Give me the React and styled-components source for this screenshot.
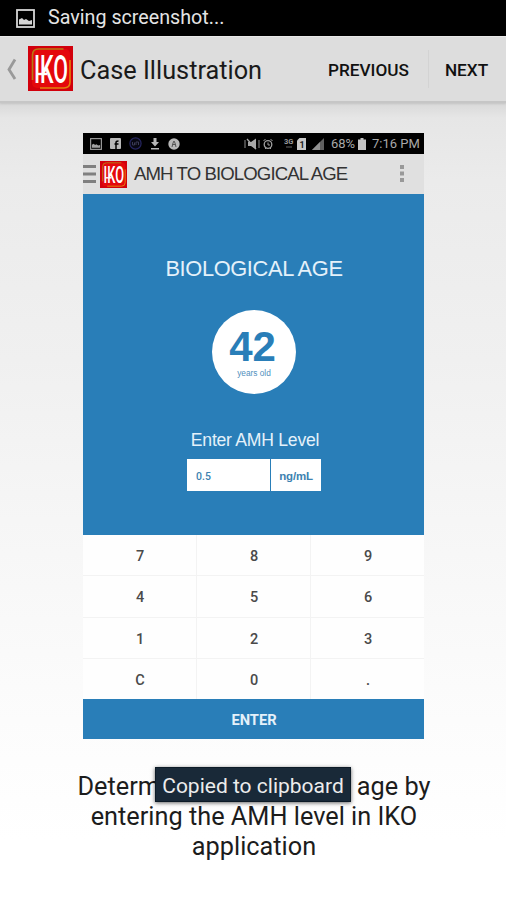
import React from "react";
import styled, { createGlobalStyle } from "styled-components";

const GlobalStyle = createGlobalStyle`
	* {
		box-sizing: border-box;
	}

	body {
		margin: 0;
		font-family: Roboto, "Liberation Sans", sans-serif;
	}
`;

const Screen = styled.div`
	width: 506px;
	height: 900px;
	overflow: hidden;
	position: relative;

	display: grid;
	grid-template-rows: 36px 67px 1fr;

	background: linear-gradient(#d8d8d8 102px, #e6e6e6 118px, #ebebeb 180px, #f0f0f0 360px, #f6f6f6 520px, #fcfcfc 720px, #ffffff 840px);
`;

const StatusBar = styled.div`
	background: #000;
	color: #e4e4e4;
	padding-left: 16px;

	display: flex;
	align-items: center;
	gap: 13px;

	span {
		font-size: 19.7px;
		line-height: 34px;
	}
`;

const ActionBar = styled.header`
	background: #dddddd;
	border-top: 1px solid #e9e9e9;
	border-bottom: 2px solid #c6c6c6;
	box-shadow: 0 1px 2px rgba(0, 0, 0, 0.1);

	display: grid;
	grid-template-columns: 28px 52px 1fr 117px 78px;
	align-items: center;

	> svg {
		margin-bottom: 1px;
	}
`;

const BarTitle = styled.h1`
	margin: 0;
	padding-top: 3px;
	font-size: 25.3px;
	font-weight: 400;
	line-height: 30px;
	white-space: nowrap;
	color: #1a1a1a;
`;

const BarAction = styled.button`
	height: 38px;
	padding: 2px 2px 0 0;
	border: 0;
	border-left: ${({ $divider }) => ($divider ? "1px solid #d3d3d3" : "0")};
	background: none;
	font-family: inherit;
	font-size: 17.2px;
	font-weight: 500;
	color: #111;
`;

const Main = styled.main`
	padding-top: 30px;

	display: flex;
	flex-direction: column;
	align-items: center;
`;

const Phone = styled.section`
	width: 341px;
	height: 606px;
	margin-left: 1px;

	display: grid;
	grid-template-rows: 21px 40px 341px 164px 40px;
`;

const PhoneStatus = styled.div`
	background: #000;
	color: #a8a8a8;
	padding: 0 4px 0 7px;

	display: flex;
	align-items: center;
	justify-content: space-between;
`;

const PhoneIcons = styled.div`
	display: flex;
	align-items: center;
	gap: ${({ $gap }) => $gap}px;
`;

const PhoneText = styled.span`
	width: ${({ $width }) => $width}px;
	margin-left: ${({ $left }) => $left}px;
	font-size: 13px;
	line-height: 20px;
	white-space: nowrap;
`;

const PhoneBar = styled.div`
	background: #e0e0e0;

	display: grid;
	grid-template-columns: 17px 34px 1fr 46px;
	align-items: center;

	.title {
		font-family: "Liberation Sans", sans-serif;
		font-size: 18.6px;
		letter-spacing: -0.9px;
		white-space: nowrap;
		color: #333;
	}
`;

const AgePanel = styled.div`
	background: #297eb8;
	padding: 62px 0 0 1px;
	font-family: "Liberation Sans", sans-serif;
	color: #e4f1fa;

	display: flex;
	flex-direction: column;
	align-items: center;
`;

const PanelTitle = styled.div`
	font-size: 21.8px;
	line-height: 26px;
	letter-spacing: -0.35px;
	white-space: nowrap;
`;

const AgeCircle = styled.div`
	width: 84px;
	height: 84px;
	margin-top: 28px;
	border-radius: 50%;
	background: #fff;
	color: #297eb8;

	display: flex;
	flex-direction: column;
	align-items: center;

	.age {
		margin-top: 16px;
		margin-right: 3px;
		font-size: 42px;
		font-weight: bold;
		line-height: 42px;
	}

	.unit {
		margin-top: 1px;
		font-size: 8.3px;
		line-height: 9px;
		color: #4f8fbd;
	}
`;

const FieldLabel = styled.label`
	margin-top: 36px;
	margin-left: 2px;
	font-size: 17.6px;
	line-height: 20px;
	letter-spacing: -0.25px;
`;

const Field = styled.div`
	width: 134px;
	height: 32px;
	margin-top: 9px;
	background: #fff;
	color: #3d82b0;

	display: grid;
	grid-template-columns: 83px 1fr;
	align-items: center;

	.value {
		padding-left: 9px;
		font-family: Roboto, sans-serif;
		font-size: 10.5px;
		font-weight: 500;
	}

	.unit {
		height: 100%;
		border-left: 1px solid #297eb8;
		font-size: 11.5px;
		font-weight: bold;
		letter-spacing: -0.2px;
		line-height: 34px;
		text-align: center;
	}
`;

const Keypad = styled.div`
	background: #f3f3f3;

	display: grid;
	grid-template-columns: repeat(3, 1fr);
	grid-template-rows: repeat(4, 1fr);
	gap: 1px;
`;

const Key = styled.button`
	border: 0;
	padding: 3px 0 0 1px;
	background: #fefefe;
	font-family: inherit;
	font-size: 14.5px;
	font-weight: 500;
	color: #4a4a4a;
`;

const EnterButton = styled.button`
	border: 0;
	padding: 2px 0 0 1px;
	background: #297eb8;
	font-family: inherit;
	font-size: 14.7px;
	font-weight: 700;
	color: #e4f1fa;
`;

const Caption = styled.p`
	margin: 33px 0 0 2px;
	font-size: 25.3px;
	line-height: 30px;
	white-space: nowrap;
	text-align: center;
	color: #1c1c1c;
`;

const Toast = styled.div`
	position: absolute;
	left: 155px;
	top: 767px;
	width: 196px;
	height: 35px;
	border: 1px solid #0d1b27;
	background: #192938;
	box-shadow: 0 1px 4px rgba(0, 0, 0, 0.6);
	font-size: 21px;
	line-height: 36px;
	text-align: center;
	white-space: nowrap;
	color: #ececec;
`;

function IkoLogo({ size }) {
	return (
		<svg width={size} height={size} viewBox="0 0 45 45">
			<rect width="45" height="45" fill="#d2000c" />
			<rect x="4" y="3" width="38" height="39" rx="5" fill="#e4080c" />
			<path d="M4.5 34V9q0-6 6-6h25" fill="none" stroke="#b87814" strokeWidth="1.6" />
			<path d="M42 14v22q0 6-6 6H12" fill="none" stroke="#e2830c" strokeWidth="1.6" />
			<text
				transform="translate(6 37) scale(1 1.8)"
				textLength="34"
				lengthAdjust="spacingAndGlyphs"
				fontFamily="Roboto, sans-serif"
				fontSize="22"
				fontWeight="500"
				fill="#fff"
			>
				IKO
			</text>
			<path d="M9 28h10" stroke="#fff" strokeWidth="2.4" />
		</svg>
	);
}

function PictureIcon({ size, color }) {
	return (
		<svg width={size} height={size} viewBox="0 0 19 19">
			<rect x="1" y="1" width="17" height="17" fill="none" stroke={color} strokeWidth="1.8" />
			<path d="M3 15.500v-5l3-1.500 2 2 2-1 3 2 3-1v4.500z" fill={color} />
		</svg>
	);
}

function BackIcon() {
	return (
		<svg width="28" height="30" viewBox="0 0 28 30">
			<path d="M15 5.500L9 15.500l6 9.500" fill="none" stroke="#999" strokeWidth="2.8" />
		</svg>
	);
}

function FacebookIcon() {
	return (
		<svg width="11" height="11" viewBox="0 0 11 11">
			<rect width="11" height="11" rx="1" fill="#b8b8b8" />
			<path d="M6 11V4.5Q6 3 8.5 3M4.5 6h4" fill="none" stroke="#000" strokeWidth="1.5" />
		</svg>
	);
}

function BadgeIcon() {
	return (
		<svg width="13" height="13" viewBox="0 0 13 13">
			<circle cx="6.5" cy="6.5" r="5.6" fill="#080812" stroke="#25255f" strokeWidth="1.2" />
			<path d="M3.5 5v3h2V5.5M7 8V5h2.5v3" fill="none" stroke="#3b3b55" />
		</svg>
	);
}

function DownloadIcon() {
	return (
		<svg width="10" height="12" viewBox="0 0 10 12">
			<path d="M3.5 0h3v4H9L5 8.5 1 4h2.5zM1 10h8v1.5H1z" fill="#b8b8b8" />
		</svg>
	);
}

function CircleIcon() {
	return (
		<svg width="12" height="12" viewBox="0 0 12 12">
			<circle cx="6" cy="6" r="5.7" fill="#b8b8b8" />
			<path d="M4 9l1-4 1-2 1 2 1 4M4.5 6.5h3" fill="none" stroke="#555" />
		</svg>
	);
}

function MuteIcon() {
	return (
		<svg width="16" height="12" viewBox="0 0 16 12">
			<path d="M1 2v8M15 2v8" stroke="#777" strokeWidth="1.2" />
			<path d="M4 4h3l5-3.5v11L7 8H4z" fill="#a8a8a8" />
			<path d="M3 1l9 10" stroke="#a8a8a8" strokeWidth="1.3" />
		</svg>
	);
}

function AlarmIcon() {
	return (
		<svg width="12" height="12" viewBox="0 0 11 12">
			<circle cx="5.5" cy="6.5" r="3.8" fill="none" stroke="#a0a0a0" strokeWidth="1.3" />
			<path d="M1 3l2-2M10 3L8 1M5.5 4.5v2.5h2M2.5 11l1-1M8.5 11l-1-1" fill="none" stroke="#a0a0a0" />
		</svg>
	);
}

function NetworkIcon() {
	return (
		<svg width="19" height="12" viewBox="0 0 19 12">
			<text x="8" y="6" fontSize="7.5" fontWeight="700" fill="#999">
				3G
			</text>
			<path d="M10 9h6" stroke="#444" strokeWidth="1.5" />
		</svg>
	);
}

function SimIcon() {
	return (
		<svg width="9" height="12" viewBox="0 0 9 12">
			<path d="M2.5 0H9v12H0V2.5z" fill="#c8c8c8" />
			<text x="2.4" y="9.5" fontSize="9" fontWeight="700" fill="#222">
				1
			</text>
		</svg>
	);
}

function SignalIcon() {
	return (
		<svg width="16" height="12" viewBox="0 0 16 12">
			<path d="M16 0v12H4z" fill="#606060" />
			<path d="M12 4v8H4z" fill="#929292" />
		</svg>
	);
}

function BatteryIcon() {
	return (
		<svg width="8" height="12" viewBox="0 0 8 12">
			<path d="M2.5 0h3v1.5H8V12H0V1.5h2.5z" fill="#c4c4c4" />
		</svg>
	);
}

function MenuIcon() {
	return (
		<svg width="14" height="22" viewBox="0 0 14 22">
			<path d="M0 3.5h13M0 11h13M0 18.5h13" stroke="#808080" strokeWidth="2.8" />
		</svg>
	);
}

function MoreIcon() {
	return (
		<svg width="46" height="20" viewBox="0 0 46 20">
			<path d="M22 1h4v4h-4zM22 7.5h4v4h-4zM22 14h4v4h-4z" fill="#999" />
		</svg>
	);
}

const keys = ["7", "8", "9", "4", "5", "6", "1", "2", "3", "C", "0", "."];

export default function App() {
	return (
		<Screen>
			<GlobalStyle />

			<StatusBar>
				<PictureIcon size={19} color="#d6d6d6" />
				<span>Saving screenshot...</span>
			</StatusBar>

			<ActionBar>
				<BackIcon />
				<IkoLogo size={45} />
				<BarTitle>Case Illustration</BarTitle>
				<BarAction>PREVIOUS</BarAction>
				<BarAction $divider>NEXT</BarAction>
			</ActionBar>

			<Main>
				<Phone>
					<PhoneStatus>
						<PhoneIcons $gap={8}>
							<PictureIcon size={12} color="#a0a0a0" />
							<FacebookIcon />
							<BadgeIcon />
							<DownloadIcon />
							<CircleIcon />
						</PhoneIcons>
						<PhoneIcons $gap={2}>
							<MuteIcon />
							<AlarmIcon />
							<NetworkIcon />
							<SimIcon />
							<SignalIcon />
							<PhoneText $width={25} $left={5}>
								68%
							</PhoneText>
							<BatteryIcon />
							<PhoneText $width={48} $left={4}>
								7:16 PM
							</PhoneText>
						</PhoneIcons>
					</PhoneStatus>

					<PhoneBar>
						<MenuIcon />
						<IkoLogo size={27} />
						<span className="title">AMH TO BIOLOGICAL AGE</span>
						<MoreIcon />
					</PhoneBar>

					<AgePanel>
						<PanelTitle>BIOLOGICAL AGE</PanelTitle>
						<AgeCircle>
							<span className="age">42</span>
							<span className="unit">years old</span>
						</AgeCircle>
						<FieldLabel>Enter AMH Level</FieldLabel>
						<Field>
							<span className="value">0.5</span>
							<span className="unit">ng/mL</span>
						</Field>
					</AgePanel>

					<Keypad>
						{keys.map((key) => (
							<Key key={key}>{key}</Key>
						))}
					</Keypad>

					<EnterButton>ENTER</EnterButton>
				</Phone>

				<Caption>
					Determine the biological age by
					<br />
					entering the AMH level in IKO
					<br />
					application
				</Caption>
			</Main>

			<Toast>Copied to clipboard</Toast>
		</Screen>
	);
}
